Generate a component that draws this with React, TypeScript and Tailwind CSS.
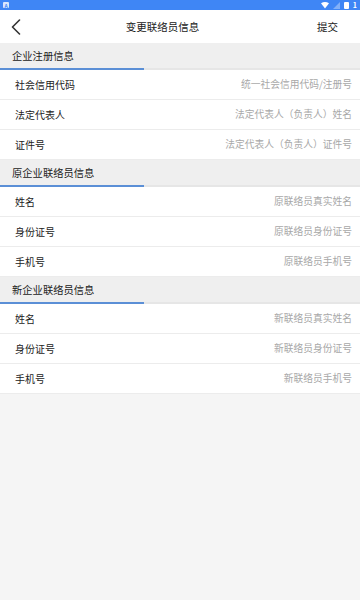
import React from "react";

type Row = { label: string; placeholder: string };
type Section = { title: string; rows: Row[] };

const sections: Section[] = [
  {
    title: "企业注册信息",
    rows: [
      { label: "社会信用代码", placeholder: "统一社会信用代码/注册号" },
      { label: "法定代表人", placeholder: "法定代表人（负责人）姓名" },
      { label: "证件号", placeholder: "法定代表人（负责人）证件号" },
    ],
  },
  {
    title: "原企业联络员信息",
    rows: [
      { label: "姓名", placeholder: "原联络员真实姓名" },
      { label: "身份证号", placeholder: "原联络员身份证号" },
      { label: "手机号", placeholder: "原联络员手机号" },
    ],
  },
  {
    title: "新企业联络员信息",
    rows: [
      { label: "姓名", placeholder: "新联络员真实姓名" },
      { label: "身份证号", placeholder: "新联络员身份证号" },
      { label: "手机号", placeholder: "新联络员手机号" },
    ],
  },
];

export default function App() {
  return (
    <div
      className="w-[360px] h-[600px] flex flex-col bg-[#f5f5f5] overflow-hidden"
      style={{ fontFamily: '"Noto Sans CJK SC", "Noto Sans", sans-serif' }}
    >
      {/* status bar */}
      <div className="h-[10px] bg-[#3f86f5] flex items-center justify-between px-[3px]">
        <div className="w-[6px] h-[6px] bg-white/80 rounded-[1px] flex items-center justify-center text-[5px] leading-none text-[#3f86f5] font-bold">
          A
        </div>
        <div className="flex items-center gap-[4px]">
          <svg width="8" height="7" viewBox="0 0 8 7">
            <path d="M0 1.2 Q4 -1 8 1.2 L4 6.5 Z" fill="white" />
          </svg>
          <svg width="7" height="7" viewBox="0 0 7 7">
            <path d="M7 0 L7 7 L0 7 Z" fill="white" opacity="0.35" />
          </svg>
          <div className="w-[5px] h-[7px] bg-white rounded-[1px]" />
          <span className="text-white text-[7px] leading-none font-bold">1</span>
        </div>
      </div>

      {/* nav bar */}
      <div className="h-[33px] bg-white flex items-center justify-between relative">
        <div className="w-[30px] flex items-center justify-center pl-[2px]">
          <svg width="10" height="16" viewBox="0 0 10 16" fill="none">
            <path d="M8.5 1 L1.5 8 L8.5 15" stroke="#333" strokeWidth="1.6" strokeLinecap="round" strokeLinejoin="round" />
          </svg>
        </div>
        <div className="absolute left-0 right-0 pr-[35px] text-center text-[10.5px] text-[#222] pointer-events-none">
          变更联络员信息
        </div>
        <div className="pr-[22px] text-[10.5px] text-[#222]">提交</div>
      </div>

      {sections.map((s) => (
        <div key={s.title} className="flex flex-col">
          <div className="h-[27px] bg-[#efefef] flex flex-col">
            <div className="flex-1 flex items-center pl-[12px] text-[10.3px] text-[#222]">
              {s.title}
            </div>
            <div className="h-[2px] bg-[#e6e6e6] flex">
              <div className="w-[144px] h-[2px] bg-[#5b8fd6]" />
            </div>
          </div>
          {s.rows.map((r) => (
            <div
              key={r.label}
              className="h-[30px] bg-white flex items-center justify-between pl-[15px] pr-[8px] border-b border-[#ececec]"
            >
              <span className="text-[10px] text-[#222]">{r.label}</span>
              <span className="text-[9.75px] text-[#a8a8a8]">{r.placeholder}</span>
            </div>
          ))}
        </div>
      ))}
      <div className="flex-1" />
    </div>
  );
}
